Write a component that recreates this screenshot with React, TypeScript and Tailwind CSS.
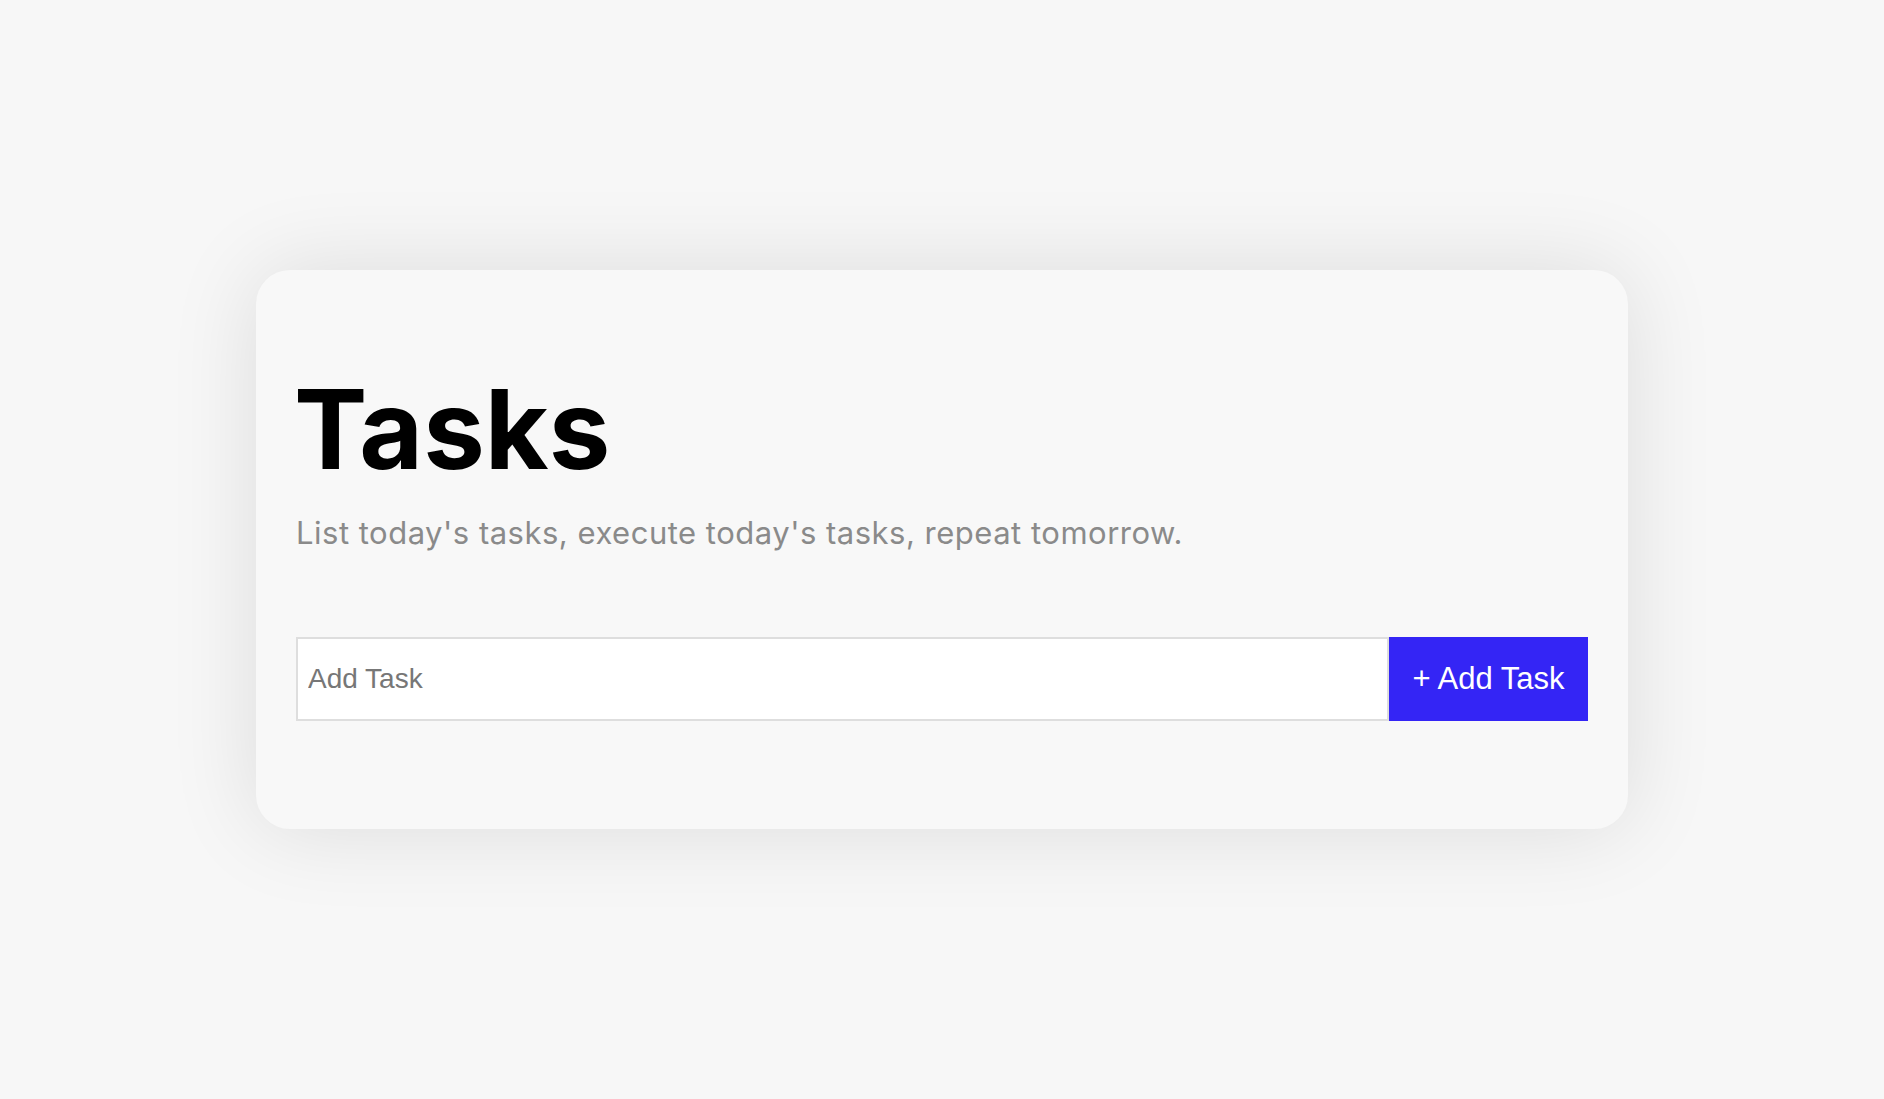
import { useState } from 'react';

export default function App() {
  const [task, setTask] = useState('');

  return (
    <div className="min-h-screen w-full bg-[#f7f7f7] flex items-center justify-center">
      {/* Card */}
      <div className="w-[1372px] rounded-[34px] bg-[#f8f8f8] px-10 pt-[104px] pb-[108px] shadow-[0_0_90px_rgba(0,0,0,0.11)]">
        <h1 className="-ml-[2px] text-[110px] leading-none font-bold text-black font-['Inter',sans-serif]">
          Tasks
        </h1>
        <p className="mt-[33px] text-[31px] leading-none tracking-[0.5px] text-[#8a8a8a] font-['Inter',sans-serif]">
          List today's tasks, execute today's tasks, repeat tomorrow.
        </p>

        {/* Form */}
        <form
          className="mt-[89px] flex h-[84px]"
          onSubmit={(e) => {
            e.preventDefault();
            setTask('');
          }}
        >
          <input
            type="text"
            value={task}
            onChange={(e) => setTask(e.target.value)}
            placeholder="Add Task"
            className="flex-1 min-w-0 bg-white border-2 border-[#dedede] px-[10px] text-[28px] text-black placeholder:text-[#777777] outline-none font-['Liberation_Sans',Arial,sans-serif]"
          />
          <button
            type="submit"
            className="w-[199px] shrink-0 bg-[#3425f5] text-white text-[31px] font-['Liberation_Sans',Arial,sans-serif]"
          >
            + Add Task
          </button>
        </form>
      </div>
    </div>
  );
}
